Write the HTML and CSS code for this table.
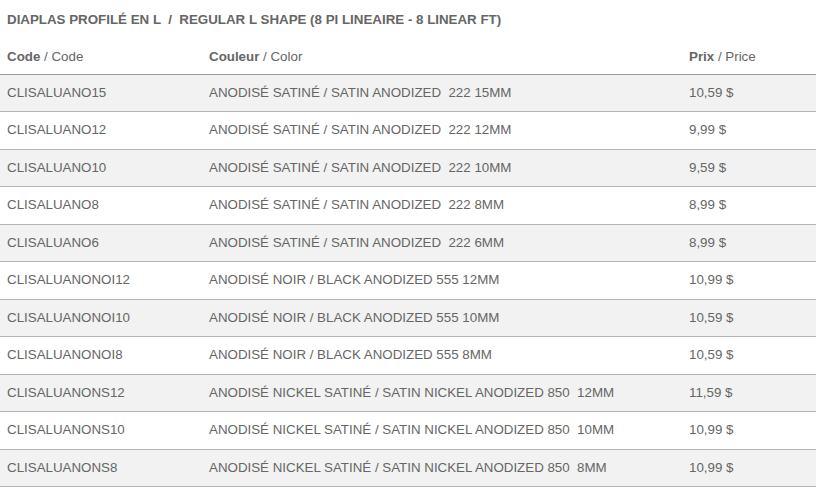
FILE: index.html
```html
<!DOCTYPE html>
<html>
<head>
<meta charset="utf-8">
<title>Diaplas profilé en L</title>
<link rel="stylesheet" href="styles.css">
</head>
<body>
	<!-- Product table -->
	<div class="divProduct">
		<p class="title">DIAPLAS PROFILÉ EN L &nbsp;/ &nbsp;REGULAR L SHAPE (8 PI LINEAIRE - 8 LINEAR FT)</p>
		<table class="prices">
			<thead>
				<tr>
					<th class="colCode"><b>Code</b> / Code</th>
					<th class="colColor"><b>Couleur</b> / Color</th>
					<th><b>Prix</b> / Price</th>
				</tr>
			</thead>
			<tbody>
				<tr><td>CLISALUANO15</td><td>ANODISÉ SATINÉ / SATIN ANODIZED &nbsp;222 15MM</td><td>10,59 $</td></tr>
				<tr><td>CLISALUANO12</td><td>ANODISÉ SATINÉ / SATIN ANODIZED &nbsp;222 12MM</td><td>9,99 $</td></tr>
				<tr><td>CLISALUANO10</td><td>ANODISÉ SATINÉ / SATIN ANODIZED &nbsp;222 10MM</td><td>9,59 $</td></tr>
				<tr><td>CLISALUANO8</td><td>ANODISÉ SATINÉ / SATIN ANODIZED &nbsp;222 8MM</td><td>8,99 $</td></tr>
				<tr><td>CLISALUANO6</td><td>ANODISÉ SATINÉ / SATIN ANODIZED &nbsp;222 6MM</td><td>8,99 $</td></tr>
				<tr><td>CLISALUANONOI12</td><td>ANODISÉ NOIR / BLACK ANODIZED 555 12MM</td><td>10,99 $</td></tr>
				<tr><td>CLISALUANONOI10</td><td>ANODISÉ NOIR / BLACK ANODIZED 555 10MM</td><td>10,59 $</td></tr>
				<tr><td>CLISALUANONOI8</td><td>ANODISÉ NOIR / BLACK ANODIZED 555 8MM</td><td>10,59 $</td></tr>
				<tr><td>CLISALUANONS12</td><td>ANODISÉ NICKEL SATINÉ / SATIN NICKEL ANODIZED 850 &nbsp;12MM</td><td>11,59 $</td></tr>
				<tr><td>CLISALUANONS10</td><td>ANODISÉ NICKEL SATINÉ / SATIN NICKEL ANODIZED 850 &nbsp;10MM</td><td>10,99 $</td></tr>
				<tr><td>CLISALUANONS8</td><td>ANODISÉ NICKEL SATINÉ / SATIN NICKEL ANODIZED 850 &nbsp;8MM</td><td>10,99 $</td></tr>
			</tbody>
		</table>
	</div>
</body>
</html>
```

FILE: styles.css
```css
body {
	margin: 0;
	background: #fff;
	color: #666;
	font-family: "Liberation Sans", Arial, sans-serif;
	font-size: 13.33px;
}
.title {
	margin: 0;
	padding: 11px 7px 10px;
	line-height: 18px;
	font-weight: bold;
}
.prices {
	width: 816px;
	border-collapse: collapse;
}
.prices th {
	text-align: left;
	font-weight: normal;
	padding: 9px 7px;
	line-height: 17px;
	border-bottom: 1px solid #999;
}
.prices td {
	padding: 9px 7px;
	line-height: 18.45px;
	border-bottom: 1px solid #b4b4b4;
}
.prices tbody tr:nth-child(odd) { background: #f1f2f1; }

.colCode { width: 188px; }
.colColor { width: 466px; }
```
